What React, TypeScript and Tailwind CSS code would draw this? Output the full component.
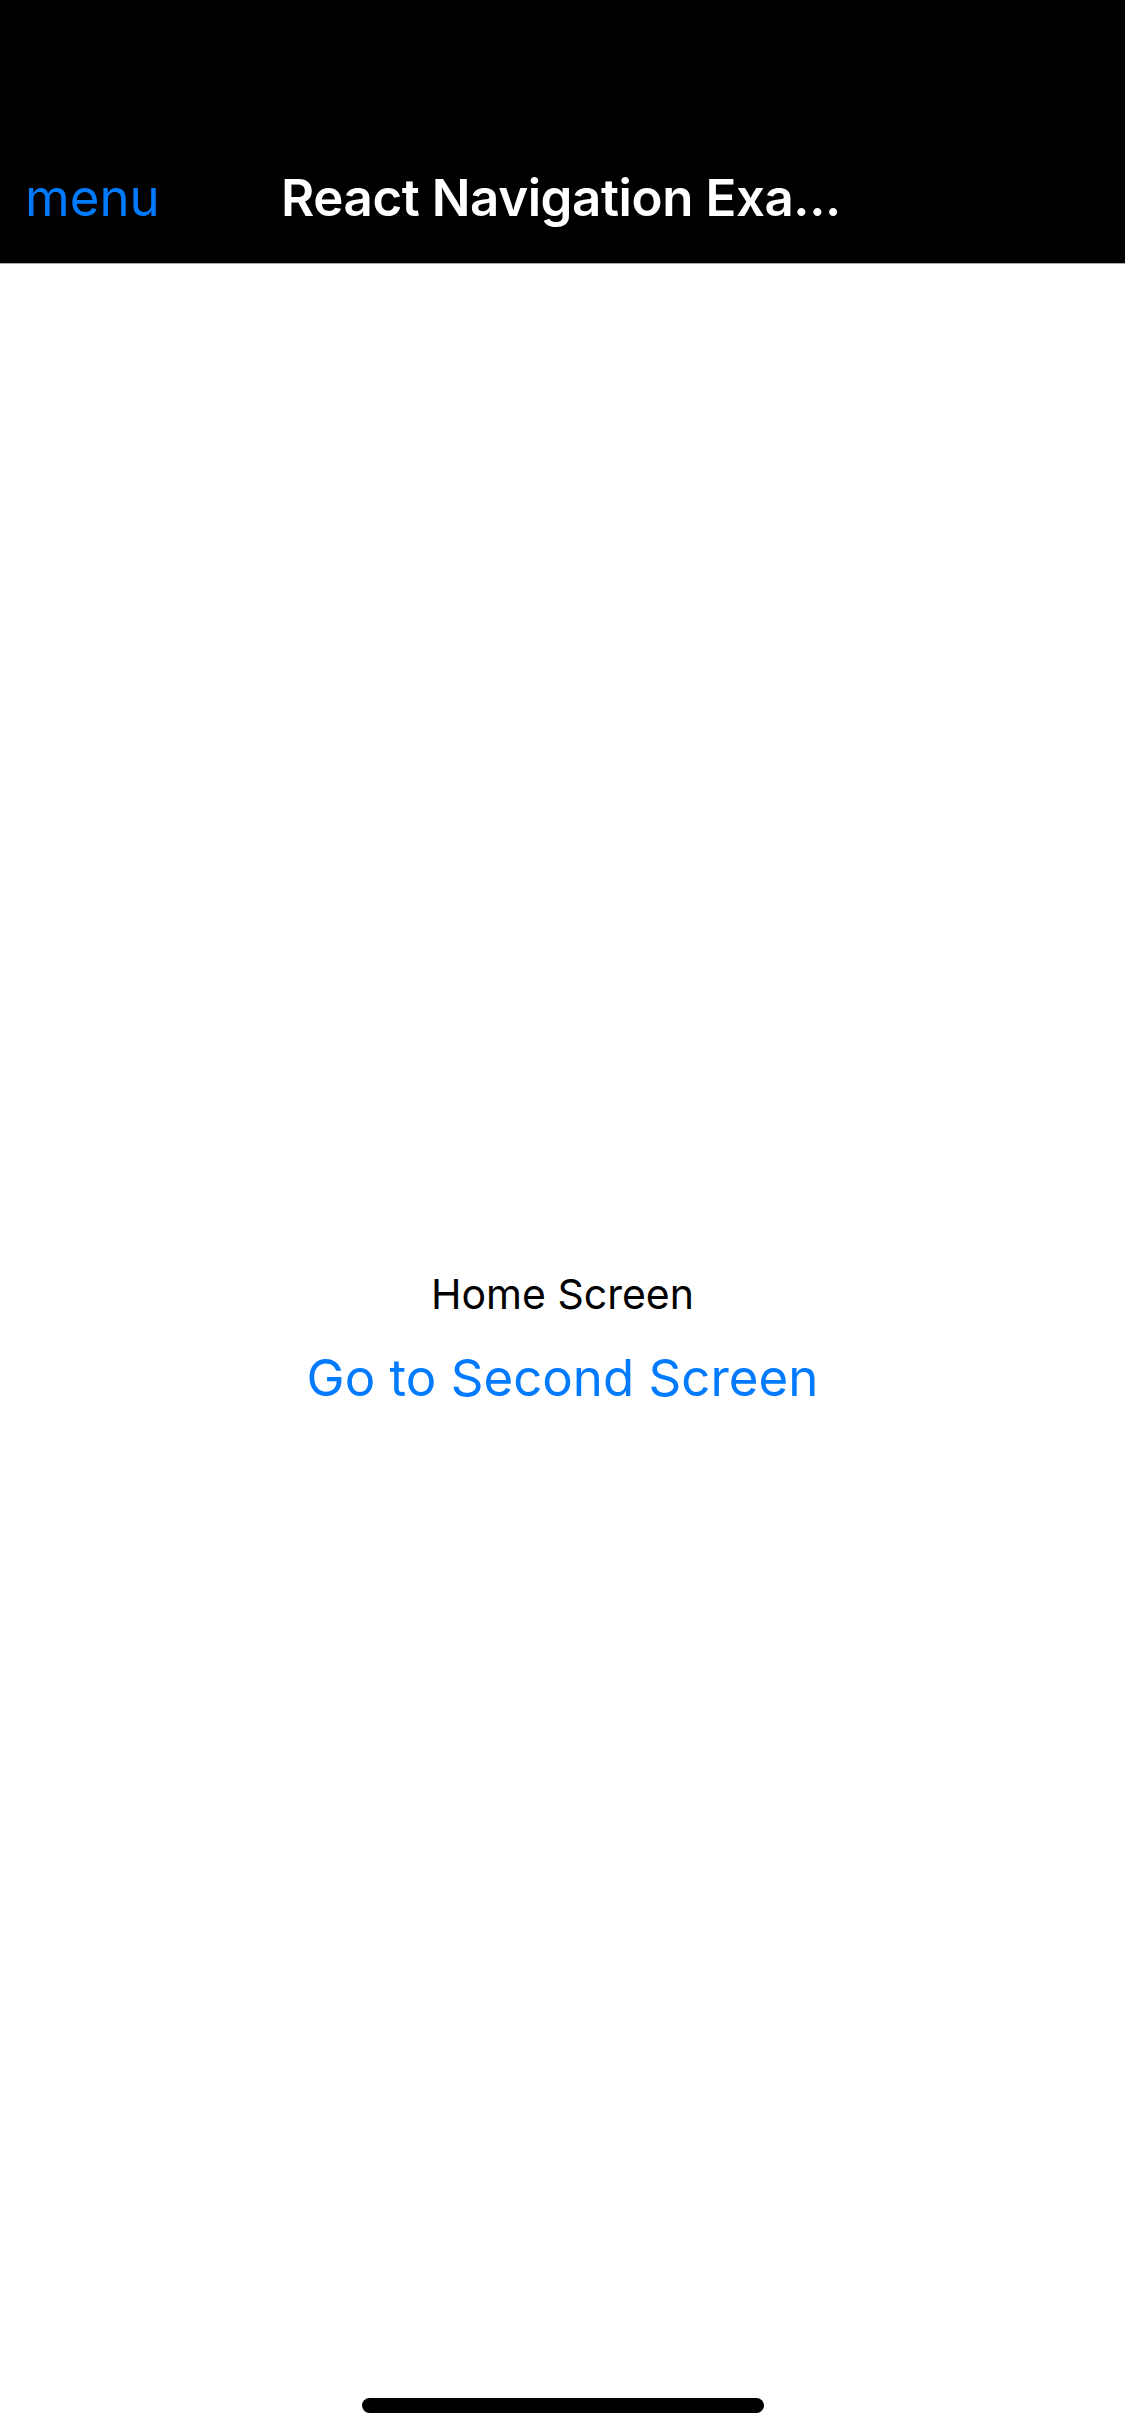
export default function App() {
  return (
    <div className="flex h-[2436px] w-[1125px] flex-col bg-white font-['Inter','Liberation_Sans',sans-serif]">
      {/* Header — status bar area + nav bar */}
      <header className="h-[264px] shrink-0 border-b border-[#a7a7aa] bg-black pt-[132px]">
        <div className="relative flex h-[130px] items-center justify-center">
          <button className="absolute left-[25px] top-1/2 -translate-y-1/2 text-[51px] leading-none text-[#007aff]">
            menu
          </button>
          <h1 className="pr-[3px] text-[51px] font-semibold leading-none tracking-[-0.4px] text-white">
            React Navigation Exa...
          </h1>
        </div>
      </header>

      {/* Body */}
      <main className="relative flex flex-1 flex-col items-center justify-center pb-[23px]">
        <p className="text-[41px] leading-[50px] text-black">Home Screen</p>
        <button className="mt-[28px] text-[51px] leading-[61px] text-[#007aff]">
          Go to Second Screen
        </button>

        {/* Home indicator */}
        <div className="absolute bottom-[23px] left-1/2 h-[15px] w-[402px] -translate-x-1/2 rounded-full bg-black" />
      </main>
    </div>
  );
}
